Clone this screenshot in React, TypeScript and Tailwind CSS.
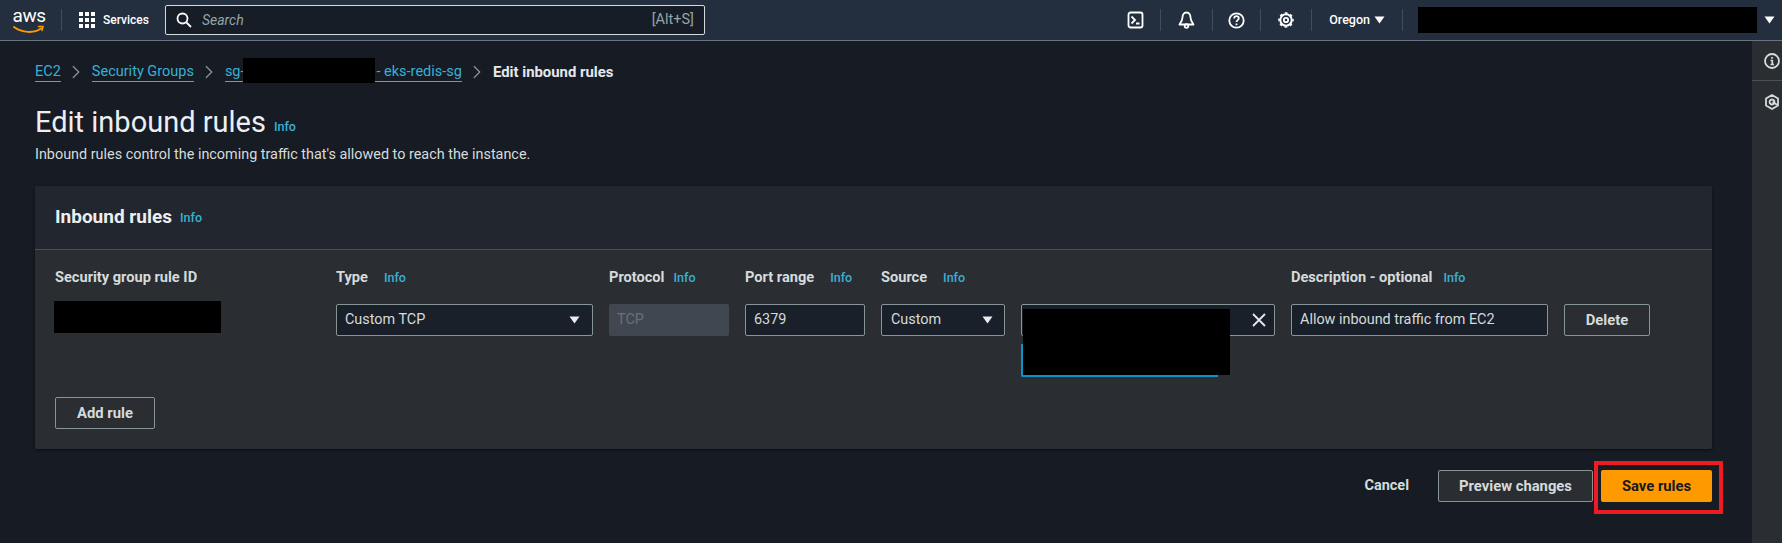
import { ChevronRight } from 'lucide-react'

const Info = ({ className = '' }: { className?: string }) => (
  <span className={`text-[12.500px] font-medium leading-none text-[#39b0d6] ${className}`}>Info</span>
)

const Caret = ({ className = '' }: { className?: string }) => (
  <svg className={className} width="11" height="8" viewBox="0 0 11 8">
    <path d="M0.5 0.5h10L5.5 7.5z" fill="currentColor" />
  </svg>
)

const Divider = () => <div className="h-[22px] w-px bg-[#414d5c]" />

const inputClass =
  'h-8 rounded-[2px] border border-[#879596] bg-[#1a2029] flex items-center text-[14.400px] text-[#d5dbdb]'

const Header = () => (
  <header className="flex h-[41px] shrink-0 items-center border-b border-[#6b7280] bg-[#232f3e] text-white">
    <div className="relative ml-[13px] flex h-[30px] w-[32px] shrink-0 flex-col items-center">
      <span className="text-[19px] leading-[22px] tracking-[-0.5px] text-white">aws</span>
      <svg className="absolute left-0 top-[20px]" width="32" height="10" viewBox="0 0 32 10" fill="none">
        <path d="M1 2c8 6 20 6.500 27 1.500" stroke="#ff9900" strokeWidth="2" strokeLinecap="round" />
        <path d="M25.500 1.500h4.500l-1 4" stroke="#ff9900" strokeWidth="1.500" strokeLinecap="round" />
      </svg>
    </div>
    <div className="ml-[16px] h-[22px] w-px bg-[#414d5c]" />
    <svg className="ml-[17px]" width="16" height="16" viewBox="0 0 16 16" fill="#fff">
      <rect x="0" y="0" width="4" height="4" />
      <rect x="6" y="0" width="4" height="4" />
      <rect x="12" y="0" width="4" height="4" />
      <rect x="0" y="6" width="4" height="4" />
      <rect x="6" y="6" width="4" height="4" />
      <rect x="12" y="6" width="4" height="4" />
      <rect x="0" y="12" width="4" height="4" />
      <rect x="6" y="12" width="4" height="4" />
      <rect x="12" y="12" width="4" height="4" />
    </svg>
    <span className="ml-[8px] text-[12px] font-medium">Services</span>
    <div className="ml-[16px] flex h-[30px] w-[540px] items-center rounded-[2px] border border-[#d5dbdb] bg-[#161d26] px-[10px]">
      <svg width="16" height="16" viewBox="0 0 16 16" fill="none" stroke="#fff" strokeWidth="1.800">
        <circle cx="6.500" cy="6.500" r="5" />
        <path d="M10.500 10.500l4.500 4.500" />
      </svg>
      <span className="ml-[10px] text-[14px] italic text-[#95a5a6]">Search</span>
      <span className="ml-auto text-[14.500px] text-[#95a5a6]">[Alt+S]</span>
    </div>

    <div className="ml-auto flex items-center">
      <svg className="mr-[15px]" width="18" height="18" viewBox="0 0 18 18" fill="none" stroke="#fff" strokeWidth="1.800">
        <rect x="1.500" y="1.500" width="14" height="15" rx="2" />
        <path d="M4.500 5.500l3.500 3.500-3.500 3.500M9 12.500h3.500" />
      </svg>
      <Divider />
      <svg className="mx-[17px]" width="17" height="18" viewBox="0 0 17 18" fill="none" stroke="#fff" strokeWidth="1.800">
        <path d="M8.500 1.500c3 0 4 3 4 5 0 3 1.500 5 3 7h-14c1.500-2 3-4 3-7 0-2 1-5 4-5z" strokeLinejoin="round" />
        <circle cx="8.500" cy="15" r="1.800" />
      </svg>
      <Divider />
      <svg className="mx-[15px]" width="17" height="17" viewBox="0 0 17 17" fill="none" stroke="#fff" strokeWidth="1.800">
        <circle cx="8.500" cy="8.500" r="7.200" />
        <path d="M6.200 6.500c0-1.500 1-2.300 2.300-2.300s2.300 0.800 2.300 2.100c0 1.800-2.300 1.800-2.300 3.700" />
        <path d="M8.500 11.500v1.700" />
      </svg>
      <Divider />
      <svg className="mx-[17px]" width="16" height="16" viewBox="0 0 16 16" fill="none" stroke="#fff">
        <circle cx="8" cy="8" r="5.700" strokeWidth="2" />
        <circle cx="8" cy="8" r="7" strokeWidth="1.500" strokeDasharray="2.750 2.750" strokeDashoffset="1.370" />
        <circle cx="8" cy="8" r="2.200" strokeWidth="1.800" />
      </svg>
      <Divider />
      <span className="ml-[17px] text-[12.500px] font-medium">Oregon</span>
      <Caret className="ml-[4px] mr-[17px] text-white" />
      <Divider />
      <div className="ml-[15px] h-[26px] w-[339px] bg-black" />
      <Caret className="ml-[7px] mr-[7px] text-white" />
    </div>
  </header>
)

const Breadcrumbs = () => {
  const chevron = <ChevronRight size={22} strokeWidth={1.3} className="mx-[4.500px] text-[#8d9699]" />
  const link = 'text-[14.500px] leading-[18px] text-[#39b0d6] border-b border-[#39b0d6]'
  return (
    <nav className="flex h-[24px] items-center">
      <a className={link}>EC2</a>
      {chevron}
      <a className={link}>Security Groups</a>
      {chevron}
      <a className={`relative ${link} w-[237px]`}>
        sg-
        <span className="absolute left-[18px] top-[-5px] h-[25px] w-[132px] bg-black" />
        <span className="absolute right-0"> - eks-redis-sg</span>
      </a>
      {chevron}
      <span className="text-[14.900px] font-bold text-[#e5e7eb]">Edit inbound rules</span>
    </nav>
  )
}

const ColumnLabel = ({ children, gap }: { children: string; gap: string }) => (
  <div className="flex h-[18px] items-center">
    <span className="text-[14.600px] font-bold text-[#d5dbdb]">{children}</span>
    <Info className={gap} />
  </div>
)

const RulesCard = () => (
  <section className="mt-[22px] h-[263px] rounded-[2px] bg-[#2a2e33] shadow-[0_1px_3px_rgba(0,0,0,.5)]">
    <div className="flex h-[64px] items-center border-b border-[#4a5058] bg-[#22262e] px-[20px] pb-[1px]">
      <h2 className="text-[19px] font-bold text-[#eceff1]">Inbound rules</h2>
      <Info className="ml-[8px] mt-[2px]" />
    </div>

    <div className="px-[20px] pt-[19px]">
      <div className="grid grid-cols-[265px_257px_120px_120px_124px_254px_257px_86px] gap-x-[16px]">
        <div className="relative">
          <ColumnLabel gap="hidden">Security group rule ID</ColumnLabel>
          <div className="absolute left-[-1px] top-[32px] h-[32px] w-[167px] bg-black" />
        </div>
        <div>
          <ColumnLabel gap="ml-[16px]">Type</ColumnLabel>
          <div className={`${inputClass} mt-[17px] justify-between px-[8px]`}>
            <span>Custom TCP</span>
            <Caret className="mr-[4px] text-[#eaeded]" />
          </div>
        </div>
        <div>
          <ColumnLabel gap="ml-[9px]">Protocol</ColumnLabel>
          <div className="mt-[17px] flex h-8 items-center rounded-[2px] bg-[#414750] px-[8px] text-[14.400px] text-[#687078]">TCP</div>
        </div>
        <div>
          <ColumnLabel gap="ml-[16px]">Port range</ColumnLabel>
          <div className={`${inputClass} mt-[17px] px-[8px]`}>6379</div>
        </div>
        <div>
          <ColumnLabel gap="ml-[16px]">Source</ColumnLabel>
          <div className={`${inputClass} mt-[17px] justify-between px-[9px]`}>
            <span>Custom</span>
            <Caret className="mr-[2px] text-[#eaeded]" />
          </div>
        </div>
        <div className="relative pt-[35px]">
          <div className={`${inputClass} justify-end px-[9px]`}>
            <svg width="14" height="14" viewBox="0 0 14 14" stroke="#e5e7eb" strokeWidth="1.800" className="mr-[-1px]">
              <path d="M1 1l12 12M13 1L1 13" />
            </svg>
          </div>
          <div className="absolute left-0 top-[75px] h-[33px] w-[197px] rounded-bl-[2px] border-b-2 border-l-2 border-[#0a93c4]" />
          <div className="absolute left-[2px] top-[40px] h-[66px] w-[207px] bg-black" />
        </div>
        <div>
          <ColumnLabel gap="ml-[11px]">Description - optional</ColumnLabel>
          <div className={`${inputClass} mt-[17px] px-[8px]`}>Allow inbound traffic from EC2</div>
        </div>
        <div className="pt-[35px]">
          <button className="flex h-8 w-full items-center justify-center rounded-[2px] border border-[#879596] text-[14.800px] font-bold text-[#d5dbdb]">
            Delete
          </button>
        </div>
      </div>

      <button className="mt-[61px] flex h-8 w-[100px] items-center justify-center rounded-[2px] border border-[#879596] text-[14.800px] font-bold text-[#d5dbdb]">
        Add rule
      </button>
    </div>
  </section>
)

const Footer = () => (
  <div className="mt-[21px] flex h-8 items-center justify-end">
    <button className="mr-[29px] text-[14.500px] font-bold text-[#d5dbdb]">Cancel</button>
    <button className="flex h-8 w-[155px] items-center justify-center rounded-[2px] border border-[#879596] bg-[#2a2e33] text-[14.800px] font-bold text-[#d5dbdb]">
      Preview changes
    </button>
    <div className="relative ml-[8px]">
      <button className="flex h-8 w-[111px] items-center justify-center rounded-[2px] bg-[#ff9900] text-[14.800px] font-bold text-[#16191f]">
        Save rules
      </button>
      <div className="absolute left-[-7px] top-[-9px] h-[53px] w-[129px] border-[4px] border-[#ed1c24]" />
    </div>
  </div>
)

const SidePanel = () => (
  <aside className="w-[30px] shrink-0 bg-[#2a2e33]">
    <div className="flex h-[40px] items-center justify-center border-b border-[#4a5058] pl-[10px]">
      <svg width="16" height="16" viewBox="0 0 16 16" fill="none" stroke="#d5dbdb">
        <circle cx="8" cy="8" r="7" strokeWidth="1.800" />
        <path d="M8 4v1.800M6.500 7.500H8.300V11.500M6.500 11.500h3.500" strokeWidth="1.700" />
      </svg>
    </div>
    <div className="flex h-[42px] items-center justify-center pl-[10px]">
      <svg width="14" height="16" viewBox="0 0 14 16" fill="none" stroke="#d5dbdb" strokeWidth="1.800">
        <path d="M7 1l6 3.500v7L7 15l-6-3.500v-7z" strokeLinejoin="round" />
        <path d="M7 5.500a2.500 2.500 0 1 0 0.100 0M7.500 8l5 3" />
      </svg>
    </div>
  </aside>
)

export default function App() {
  return (
    <div className="flex h-[543px] w-[1782px] flex-col overflow-hidden bg-[#161b24] font-['Roboto',sans-serif]">
      <Header />
      <div className="flex min-h-0 flex-1">
        <main className="min-w-0 flex-1 pl-[35px] pr-[40px] pt-[19px]">
          <Breadcrumbs />
          <div className="mt-[20px] flex items-end">
            <h1 className="text-[29px] font-normal leading-[36px] text-[#eceff1]">Edit inbound rules</h1>
            <Info className="mb-[7px] ml-[8px]" />
          </div>
          <p className="mt-[6px] text-[14.400px] leading-[18px] text-[#d5dbdb]">
            Inbound rules control the incoming traffic that's allowed to reach the instance.
          </p>
          <RulesCard />
          <Footer />
        </main>
        <SidePanel />
      </div>
    </div>
  )
}
